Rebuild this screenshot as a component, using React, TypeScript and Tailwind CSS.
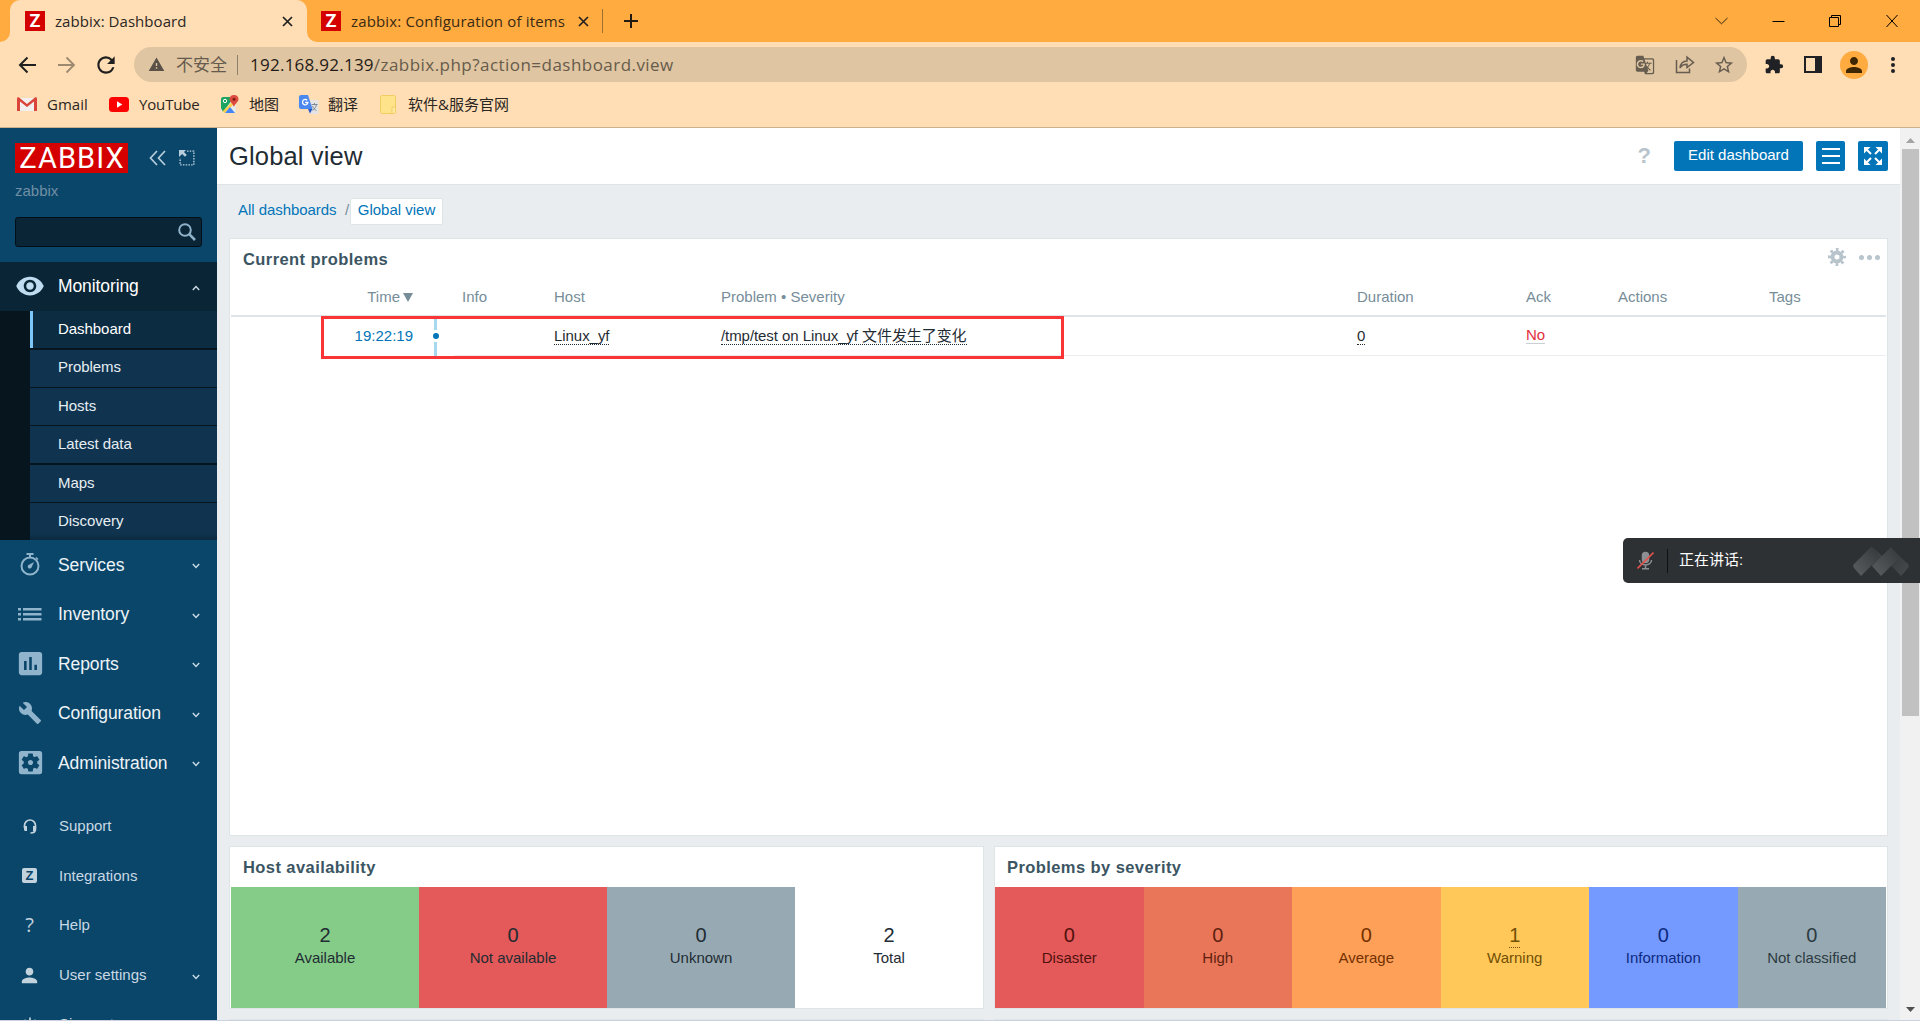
import React from "react";
import {
  MdExtension,
  MdGTranslate,
  MdInsertChart,
  MdPerson,
  MdPowerSettingsNew,
  MdRemoveRedEye,
  MdSettingsApplications,
  MdBuild,
  MdStarBorder,
  MdRefresh,
  MdWarning,
} from "react-icons/md";

const chromeFont = "font-['Open_Sans','Noto_Sans_CJK_SC',sans-serif]";
const appFont = "font-['Liberation_Sans','Noto_Sans_CJK_SC',sans-serif]";

function ZFavicon() {
  return (
    <div className="flex h-5 w-5 shrink-0 items-center justify-center bg-[#d40000] font-['Roboto',sans-serif] text-[18px] leading-none font-bold text-white">
      Z
    </div>
  );
}

function TabClose() {
  return (
    <svg className="h-[11px] w-[11px]" viewBox="0 0 11 11" stroke="#1f1f1f" strokeWidth="1.7">
      <path d="M1 1l9 9M10 1l-9 9" />
    </svg>
  );
}

function TabStrip() {
  return (
    <div className="flex h-[42px] bg-[#ffab40]">
      <div className="flex w-[10px] items-end">
        <div className="h-[10px] w-[10px] bg-[#ffdeb5]">
          <div className="h-full w-full rounded-br-[10px] bg-[#ffab40]" />
        </div>
      </div>
      <div className="flex w-[297px] items-center rounded-t-[10px] bg-[#ffdeb5] pr-[14px] pl-[15px]">
        <ZFavicon />
        <span className="ml-[10px] flex-1 text-[15px] tracking-[0.05px] text-[#2b2622]">zabbix: Dashboard</span>
        <TabClose />
      </div>
      <div className="flex w-[10px] items-end">
        <div className="h-[10px] w-[10px] bg-[#ffdeb5]">
          <div className="h-full w-full rounded-bl-[10px] bg-[#ffab40]" />
        </div>
      </div>
      <div className="flex w-[287px] items-center border-r border-transparent pl-[4px]">
        <ZFavicon />
        <span className="ml-[10px] w-[228px] text-[15px] tracking-[0.16px] whitespace-nowrap text-[#3a2a14]">
          zabbix: Configuration of items
        </span>
        <TabClose />
        <div className="ml-[13px] h-6 w-px shrink-0 bg-[#a07032]" />
      </div>
      <div className="flex w-[54px] items-center justify-center">
        <svg className="h-[14px] w-[14px]" viewBox="0 0 14 14" stroke="#221a10" strokeWidth="2">
          <path d="M7 0v14M0 7h14" />
        </svg>
      </div>
      <div className="flex flex-1 items-center justify-end pr-[22px]">
        <svg className="h-[12px] w-[183px]" viewBox="0 0 183 12" fill="none" stroke="#000">
          <path strokeWidth=".8" d="M.5 3l6 5.800 6-5.800" />
          <path d="M57.500 6.500h12" />
          <path d="M114.500 2.500h9v9h-9zM116.500 2.500v-2h9v9h-2" />
          <path d="M171.500 0l11 12M182.500 0l-11 12" />
        </svg>
      </div>
    </div>
  );
}

function Toolbar() {
  return (
    <div className="flex h-[45px] items-center bg-[#ffdeb5]">
      <div className="flex w-[134px] shrink-0 items-center pl-[18px]">
        <svg className="h-[18px] w-[18px]" viewBox="0 0 18 18" fill="none" stroke="#1f1f1f" strokeWidth="2">
          <path d="M18 9H2M9.500 1.500L2 9l7.500 7.500" />
        </svg>
        <svg className="ml-[22px] h-[18px] w-[18px]" viewBox="0 0 18 18" fill="none" stroke="#9c8970" strokeWidth="1.800">
          <path d="M0 9h16M8.500 1.500L16 9l-7.500 7.500" />
        </svg>
        <MdRefresh className="ml-[17px] h-[26px] w-[26px] text-[#1f1f1f]" />
      </div>
      <div className="flex h-[35px] w-[1613px] shrink-0 items-center rounded-full bg-[#dfc5a1] pr-[12px] pl-[14px]">
        <MdWarning className="h-[17px] w-[17px] text-[#595047]" />
        <span className="ml-[11px] text-[17px] text-[#655a4d]">不安全</span>
        <div className="ml-[10px] h-5 w-px bg-[#8f806b]" />
        <span className="ml-[12px] flex-1 text-[17px] tracking-[0.46px] text-[#665b4c]">
          <span className="tracking-[0.25px] text-[#1f1b17]">192.168.92.139</span>/zabbix.php?action=dashboard.view
        </span>
        <MdGTranslate className="h-[20px] w-[20px] text-[#665c50]" />
        <svg className="ml-[20px] h-[19px] w-[20px]" viewBox="0 0 20 19" fill="none" stroke="#665c50" strokeWidth="1.500">
          <path d="M1.500 5v12.500h13v-4" />
          <path d="M5 13c.5-4.500 3-7 7-7V2.200L18.500 7.500 12 12.500V9.200C9 9.200 6.500 10.200 5 13z" />
        </svg>
        <MdStarBorder className="ml-[18px] h-[22px] w-[22px] text-[#665c50]" />
      </div>
      <MdExtension className="ml-[17px] h-[20px] w-[20px] text-[#202124]" />
      <div className="ml-[20px] h-[17px] w-[18px] border-[2.5px] border-r-[7px] border-[#202124]" />
      <div className="ml-[18px] flex h-[28px] w-[28px] items-center justify-center rounded-full bg-[#ffab40]">
        <MdPerson className="h-[24px] w-[24px] text-[#3d2600]" />
      </div>
      <div className="ml-[23px] flex flex-col gap-[2px]">
        <i className="h-1 w-1 rounded-full bg-[#202124]" />
        <i className="h-1 w-1 rounded-full bg-[#202124]" />
        <i className="h-1 w-1 rounded-full bg-[#202124]" />
      </div>
    </div>
  );
}

function Bookmarks() {
  return (
    <div className="flex h-[41px] items-center border-b border-[#cdb18c] bg-[#ffdeb5] pb-[5px] pl-[17px] text-[15px] text-[#2b2622]">
      <svg className="h-[15px] w-[20px]" viewBox="0 0 20 15">
        <path fill="#f3efef" d="M2 1h16v13H2z" />
        <path fill="#d9453b" d="M0 1.500C0 .5 1 0 1.800.3L10 7 18.200.3C19 0 20 .5 20 1.500V14h-3V4.500L10 10 3 4.500V14H0z" />
      </svg>
      <span className="ml-[10px] w-[41px]">Gmail</span>
      <svg className="ml-[21px] h-[15px] w-[20px]" viewBox="0 0 20 15">
        <rect width="20" height="15" rx="3.500" fill="#f00" />
        <path fill="#fff" d="M8 4.300l5.300 3.200L8 10.700z" />
      </svg>
      <span className="ml-[10px] w-[61px] tracking-[-0.15px]">YouTube</span>
      <svg className="ml-[20px] h-[19px] w-[19px]" viewBox="0 0 19 19">
        <rect x="1" y="2" width="15" height="16" rx="2" fill="#e8eaea" />
        <path fill="#1da462" d="M3 2h10L1 14V4c0-1 1-2 2-2z" />
        <path fill="#1da462" d="M1 13L12 2v3L3 17z" />
        <path fill="#ffd04b" d="M2 17L14 5l2 2L5 18z" />
        <path fill="#4285f4" d="M5 18l5-6 5 6z" />
        <path fill="#dd4b3e" d="M14 0c3 0 4.500 2 4.500 4.300C18.500 7 15 8.500 14 12c-1-3.500-4.500-5-4.500-7.700C9.500 2 11 0 14 0z" />
        <circle cx="14" cy="4.300" r="1.500" fill="#7c2016" />
        <circle cx="5" cy="6" r="1.700" fill="none" stroke="#fff" />
      </svg>
      <span className="ml-[10px] w-[30px] whitespace-nowrap">地图</span>
      <svg className="ml-[20px] h-[20px] w-[20px]" viewBox="0 0 20 20">
        <path fill="#e4e4e4" d="M7 5h11c1 0 1.500.5 1.500 1.500v11c0 1-.5 1.500-1.500 1.500h-7z" />
        <path fill="#4a87ee" d="M2 0h7l4.500 14H2c-1 0-2-.8-2-2V2C0 .8 1 0 2 0z" />
        <path fill="#2a56c6" d="M9 14h4.500L11 18.500z" />
        <path fill="none" stroke="#fff" strokeWidth="1.300" d="M8.200 5.300a2.700 2.700 0 1 0 .7 2.200H6.200" />
        <path fill="none" stroke="#7c8994" d="M12.500 9.500h6M15.500 8v1.500M17.500 9.500c-.5 2.500-2 4.500-4 6M13.500 11c.8 2 2 3.500 4 4.500" />
      </svg>
      <span className="ml-[9px] w-[30px] whitespace-nowrap">翻译</span>
      <svg className="ml-[22px] h-[19px] w-[16px]" viewBox="0 0 16 19">
        <path fill="#ffe38a" stroke="#f1cd62" d="M.5 2c0-1 .5-1.500 1.500-1.500h12c1 0 1.500.5 1.500 1.500v15c0 1-.5 1.500-1.500 1.500H2C1 18.500.5 18 .5 17z" />
        <path fill="#ffe9a3" stroke="#f1cd62" d="M12 12h3.500v5c0 1-.5 1.500-1.500 1.500h-2z" />
      </svg>
      <span className="ml-[12px] whitespace-nowrap">软件&amp;服务官网</span>
    </div>
  );
}

function Chevron({ up = false }: { up?: boolean }) {
  return (
    <svg className="mt-[3px] h-[6px] w-[8px]" viewBox="0 0 8 6" fill="none" stroke="#c9dbe6" strokeWidth="1.400">
      <path d={up ? "M.8 5L4 1.500 7.200 5" : "M.8 1L4 4.500 7.200 1"} />
    </svg>
  );
}

const stopwatch = (
  <svg className="h-[23px] w-[20px]" viewBox="0 0 20 23" fill="none" stroke="#90b4cb">
    <circle cx="10" cy="13" r="8.500" strokeWidth="2" />
    <path strokeWidth="2" d="M6.500 1h7M10 1v4" />
    <path strokeWidth="1.500" d="M16 4.500l2 2" />
    <path fill="#90b4cb" stroke="none" d="M14 9l-2.500 5.500a2 2 0 1 1-2.500-2.800z" />
  </svg>
);

const listIcon = (
  <svg className="h-[13px] w-[24px]" viewBox="0 0 24 13" fill="#90b4cb">
    <path d="M0 0h3v2.500H0zM0 5h3v2.500H0zM0 10h3v2.500H0zM5 0h18.500v2.500H5zM5 5h18.500v2.500H5zM5 10h18.500v2.500H5z" />
  </svg>
);

const mainMenu = [
  { label: "Services", icon: stopwatch },
  { label: "Inventory", icon: listIcon },
  { label: "Reports", icon: <MdInsertChart className="h-[31px] w-[31px] shrink-0" /> },
  { label: "Configuration", icon: <MdBuild className="h-[24px] w-[24px] shrink-0" /> },
  { label: "Administration", icon: <MdSettingsApplications className="h-[31px] w-[31px] shrink-0" /> },
];

const headset = (
  <svg className="h-[15px] w-[14px]" viewBox="0 0 14 15" fill="none" stroke="#c3d3de" strokeWidth="1.700">
    <path d="M1.500 9V6.500a5.500 5.500 0 0 1 11 0V10c0 2.500-1.500 4-5 4" />
    <path fill="#c3d3de" stroke="none" d="M1 7h3v5H2.500A1.500 1.500 0 0 1 1 10.500zM10 7h3v5h-3z" />
  </svg>
);

const userMenu = [
  { label: "Support", icon: headset },
  {
    label: "Integrations",
    icon: (
      <div className="flex h-[15px] w-[15px] items-center justify-center rounded-[2px] bg-[#c3d3de] text-[13px] leading-none font-black text-[#0a466a]">
        Z
      </div>
    ),
  },
  { label: "Help", icon: <span className="font-['Open_Sans'] text-[20px] leading-none text-[#c3d3de]">?</span> },
  { label: "User settings", icon: <MdPerson className="h-[23px] w-[23px] shrink-0" />, sub: true },
  { label: "Sign out", icon: <MdPowerSettingsNew className="h-[20px] w-[20px] shrink-0" /> },
];

function SubItem({ label, className }: { label: string; className: string }) {
  return (
    <div className={`flex items-center pl-[28px] text-[15px] tracking-[-0.05px] text-[#e6eef3] ${className}`}>{label}</div>
  );
}

function Sidebar() {
  return (
    <aside className="flex h-[892px] w-[217px] shrink-0 flex-col overflow-hidden bg-[#0a466a]">
      <div className="mt-[15px] flex h-[30px] shrink-0 items-center pl-[15px]">
        <div className="flex h-[30px] w-[113px] items-center justify-center bg-[#d40000] pl-px font-['Roboto','Liberation_Sans'] text-[29px] leading-[30px] tracking-[1.1px] text-white">
          ZABBIX
        </div>
        <svg className="ml-[21px] h-[16px] w-[17px]" viewBox="0 0 17 16" fill="none" stroke="#b7cddb" strokeWidth="1.700">
          <path d="M8 1L1.500 8 8 15M16 1L9.500 8l6.500 7" />
        </svg>
        <svg className="ml-[13px] h-[16px] w-[16px]" viewBox="0 0 17 17" fill="none" stroke="#b7cddb">
          <path strokeWidth="1.500" strokeDasharray="1.600 1.300" d="M8.500 1.200h7.300v14.600H1.200V8.500" />
          <path fill="#b7cddb" stroke="none" d="M0 0h7.500L5.300 2.200l3 3-2 2-3-3L0 7.500z" />
        </svg>
      </div>
      <div className="mt-[9px] pl-[15px] text-[15px] leading-[18px] text-[#708fa5]">zabbix</div>
      <div className="mt-[17px] ml-[15px] flex h-[30px] w-[187px] shrink-0 items-center justify-end rounded-[3px] border border-[#020e18] bg-[#0a2636] pr-[5px]">
        <svg className="h-[18px] w-[18px]" viewBox="0 0 18 18" fill="none" stroke="#8fb2c9" strokeWidth="2">
          <circle cx="7" cy="7" r="5.800" />
          <path strokeWidth="2.500" d="M11.200 11.200l5.800 5.800" />
        </svg>
      </div>
      <div className="mt-[15px] flex h-[49px] shrink-0 items-center bg-[#0a2636] pr-[17px] pb-px">
        <div className="flex w-[58px] items-center justify-center pl-[2px] text-[#bfdcf0]">
          <MdRemoveRedEye className="h-[30px] w-[30px]" />
        </div>
        <span className="flex-1 text-[17.5px] tracking-[-0.1px] text-white">Monitoring</span>
        <Chevron up />
      </div>
      <div className="flex h-[229px] shrink-0 flex-col bg-[#06151e] pl-[30px]">
        <SubItem label="Dashboard" className="h-[37px] border-l-[3px] border-[#7cc7f8] bg-[#0c2c42] !pl-[25px] pb-[1px] !text-white" />
        <SubItem label="Problems" className="mt-[2px] h-[37px] bg-[#10344f] pb-[3px]" />
        <SubItem label="Hosts" className="mt-px h-[37px] bg-[#10344f] pb-px" />
        <SubItem label="Latest data" className="mt-px h-[37px] bg-[#10344f] pb-px" />
        <SubItem label="Maps" className="mt-[2px] h-[37px] bg-[#10344f] pb-px" />
        <SubItem label="Discovery" className="mt-px h-[37px] bg-gradient-to-b from-[#10344f] from-80% to-[#0c2a40] pb-px" />
      </div>
      {mainMenu.map((m) => (
        <div key={m.label} className="flex h-[49.5px] shrink-0 items-center pr-[17px]">
          <div className="flex w-[58px] items-center justify-center pl-[2px] text-[#90b4cb]">{m.icon}</div>
          <span className="flex-1 text-[17.5px] tracking-[-0.1px] text-[#eef4f8]">{m.label}</span>
          <Chevron />
        </div>
      ))}
      <div className="mt-[14px] flex flex-col">
        {userMenu.map((m) => (
          <div key={m.label} className="flex h-[49.6px] shrink-0 items-center pr-[17px]">
            <div className="flex w-[59px] items-center justify-center text-[#c3d3de]">{m.icon}</div>
            <span className="flex-1 text-[15px] text-[#c9d9e4]">{m.label}</span>
            {m.sub && <Chevron />}
          </div>
        ))}
      </div>
    </aside>
  );
}

function PageHeader() {
  return (
    <div className="flex h-[57px] shrink-0 items-center border-b border-[#dfe4e7] bg-white pr-3 pl-[12px]">
      <h1 className="flex-1 pt-px text-[25.5px] tracking-[0.15px] text-[#1f2c33]">Global view</h1>
      <span className="mr-[23px] pb-[2px] text-[22px] font-bold text-[#b8c4cc]">?</span>
      <div className="flex h-[30px] w-[129px] items-center justify-center rounded-[2px] bg-[#0275b8] pb-[2px] text-[15px] text-white">
        Edit dashboard
      </div>
      <div className="ml-[13px] flex h-[30px] w-[29px] items-center justify-center rounded-[2px] bg-[#0275b8]">
        <svg className="h-[16px] w-[18px]" viewBox="0 0 18 16" stroke="#fff" strokeWidth="2">
          <path d="M0 1h18M0 8h18M0 15h18" />
        </svg>
      </div>
      <div className="ml-[13px] flex h-[30px] w-[30px] items-center justify-center rounded-[2px] bg-[#0275b8]">
        <svg className="h-[18px] w-[18px]" viewBox="0 0 18 18" fill="#fff" stroke="#fff" strokeWidth="2">
          <path d="M2 2l5 5M16 2l-5 5M2 16l5-5M16 16l-5-5" />
          <path stroke="none" d="M0 0h6.500L0 6.500zM18 0h-6.500L18 6.500zM0 18h6.500L0 11.500zM18 18h-6.500l6.500-6.500z" />
        </svg>
      </div>
    </div>
  );
}

function CurrentProblems() {
  return (
    <section className="relative mt-[14px] flex h-[598px] w-[1659px] shrink-0 flex-col border border-[#dfe4e7] bg-white px-px text-[15px]">
      <div className="flex h-[41px] items-center pl-[12px]">
        <h4 className="flex-1 pb-px text-[16.5px] font-bold tracking-[0.42px] text-[#3c5563]">Current problems</h4>
        <svg className="mt-[-5px] h-[18px] w-[18px]" viewBox="0 0 18 18" fill="none" stroke="#b8c4cc">
          <circle cx="9" cy="9" r="4.500" strokeWidth="4" />
          <circle cx="9" cy="9" r="7.500" strokeWidth="3" strokeDasharray="2.700 3.190" strokeDashoffset="1.350" />
        </svg>
        <div className="mt-[-4px] mr-[6px] ml-[13px] flex gap-[3px]">
          <i className="h-[5px] w-[5px] rounded-full bg-[#b8c4cc]" />
          <i className="h-[5px] w-[5px] rounded-full bg-[#b8c4cc]" />
          <i className="h-[5px] w-[5px] rounded-full bg-[#b8c4cc]" />
        </div>
      </div>
      <div className="flex h-[37px] items-center border-b-2 border-[#dfe4e7] text-[#768d99]">
        <div className="flex w-[182px] items-center justify-end gap-[3px]">
          Time
          <svg className="h-[9px] w-[10px]" viewBox="0 0 10 9" fill="#768d99">
            <path d="M0 0h10L5 9z" />
          </svg>
        </div>
        <div className="ml-[49px] w-[92px]">Info</div>
        <div className="w-[167px]">Host</div>
        <div className="w-[636px]">Problem • Severity</div>
        <div className="w-[169px]">Duration</div>
        <div className="w-[92px]">Ack</div>
        <div className="w-[151px]">Actions</div>
        <div>Tags</div>
      </div>
      <div className="flex h-[39px] items-stretch">
        <div className="flex w-[182px] items-center justify-end pb-px text-[#0275b8]">19:22:19</div>
        <div className="ml-[21px] flex w-[3px] flex-col items-center bg-[#a8d8ee]">
          <div className="mt-[13px] flex h-[12px] w-[9px] shrink-0 items-center justify-center bg-white">
            <div className="h-[6px] w-[6px] rounded-full bg-[#0275b8]" />
          </div>
        </div>
        <div className="ml-[17px] flex flex-1 items-center border-b border-[#ebeef0] pl-[8px] text-[#1f2c33]">
          <div className="ml-[92px] w-[167px]">
            <span className="border-b border-dotted border-[#1f2c33] leading-none tracking-[-0.05px]">Linux_yf</span>
          </div>
          <div className="w-[636px]">
            <span className="border-b border-dotted border-[#1f2c33] leading-none tracking-[-0.07px]">
              /tmp/test on Linux_yf 文件发生了变化
            </span>
          </div>
          <div className="w-[169px]">
            <span className="border-b border-dotted border-[#1f2c33] leading-none">0</span>
          </div>
          <div className="pb-px">
            <span className="border-b border-[#c9cfd3] leading-none text-[#e32f3c]">No</span>
          </div>
        </div>
      </div>
      <div className="absolute top-[77px] left-[91px] h-[43px] w-[743px] border-[3px] border-[#fb3535]" />
    </section>
  );
}

const availability = [
  { n: "2", label: "Available", cls: "bg-[#86cc89]" },
  { n: "0", label: "Not available", cls: "bg-[#e45959]" },
  { n: "0", label: "Unknown", cls: "bg-[#97aab3]" },
  { n: "2", label: "Total", cls: "bg-white" },
];

const severities = [
  { n: "0", label: "Disaster", cls: "bg-[#e45959] text-[#52110f]" },
  { n: "0", label: "High", cls: "bg-[#e97659] text-[#5e1f10]" },
  { n: "0", label: "Average", cls: "bg-[#ffa059] text-[#733100]" },
  { n: "1", label: "Warning", cls: "bg-[#ffc859] text-[#725005]" },
  { n: "0", label: "Information", cls: "bg-[#7499ff] text-[#0c2a80]" },
  { n: "0", label: "Not classified", cls: "bg-[#97aab3] text-[#2c3a41]" },
];

function StatWidget({
  title,
  items,
  className,
}: {
  title: string;
  items: { n: string; label: string; cls: string }[];
  className: string;
}) {
  return (
    <section className={`flex h-[163px] flex-col border border-[#dfe4e7] bg-white ${className}`}>
      <h4 className="flex h-[40px] shrink-0 items-center pl-[12px] text-[16.5px] font-bold tracking-[0.42px] text-[#3c5563]">
        {title}
      </h4>
      <div className="flex flex-1">
        {items.map((s) => (
          <div key={s.label} className={`flex flex-1 flex-col items-center pt-[37px] ${s.cls}`}>
            <div
              className={`text-[20px] leading-[23px] ${s.n === "1" ? "border-b border-dotted border-current" : "border-b border-transparent"}`}
            >
              {s.n}
            </div>
            <div className="text-[15px] leading-[20px]">{s.label}</div>
          </div>
        ))}
      </div>
    </section>
  );
}

function ScrollBar() {
  return (
    <div className="flex w-5 shrink-0 flex-col items-center bg-[#f1f1f1]">
      <div className="flex h-[21px] items-center">
        <svg className="mt-[3px] h-[5px] w-[9px]" viewBox="0 0 9 5" fill="#a3a3a3">
          <path d="M0 5L4.500 0 9 5z" />
        </svg>
      </div>
      <div className="ml-px h-[567px] w-[17px] bg-[#c1c1c1]" />
      <div className="flex-1" />
      <svg className="mb-[8px] h-[5px] w-[9px]" viewBox="0 0 9 5" fill="#505050">
        <path d="M0 0h9L4.500 5z" />
      </svg>
    </div>
  );
}

function SpeakingToast() {
  return (
    <div className="absolute top-[538px] right-0 flex h-[45px] w-[297px] items-center rounded-l-[5px] bg-[#2e3134] pl-[14px]">
      <svg className="h-[19px] w-[17px]" viewBox="0 0 17 19" fill="none" stroke="#8d9093" strokeWidth="1.500">
        <rect x="5.500" y="1.500" width="6" height="10" rx="3" fill="#8d9093" />
        <path d="M2.500 9c0 6.500 12 6.500 12 0M8.500 14v3.500M5 17.700h7" />
        <path stroke="#e2534b" strokeWidth="1.600" d="M.5 17.500l16-16" />
      </svg>
      <div className="ml-[13px] h-6 w-px bg-[#0f1011]" />
      <span className="ml-[11px] flex-1 text-[15px] whitespace-nowrap text-white">正在讲话:</span>
      <svg className="mr-[10px] h-[30px] w-[57px]" viewBox="0 0 57 30">
        <defs>
          <linearGradient id="wing" x1="0" y1="1" x2="1" y2="0">
            <stop offset="0" stopColor="#5c5f62" />
            <stop offset="1" stopColor="#34373a" />
          </linearGradient>
          <linearGradient id="fold" x1="0" y1="0" x2="1" y2="1">
            <stop offset="0" stopColor="#303336" />
            <stop offset="1" stopColor="#484b4e" />
          </linearGradient>
        </defs>
        <path fill="url(#fold)" d="M19 0l11 11-10 9-8-9z" />
        <path fill="url(#wing)" d="M18 1l9 10L8 30 1 22c-1-1.500-1-3 0-4z" />
        <path fill="url(#fold)" d="M38 2l17 16c1 1.500 1 3 0 4l-7 8-18-19z" />
        <path fill="url(#wing)" d="M38 1l9 10-19 19-9-10z" />
      </svg>
    </div>
  );
}

export default function App() {
  return (
    <div className={`relative flex h-[1021px] w-[1920px] flex-col overflow-hidden bg-[#cdd2e0] ${appFont}`}>
      <header className={chromeFont}>
        <TabStrip />
        <Toolbar />
        <Bookmarks />
      </header>
      <div className="flex h-[892px]">
        <Sidebar />
        <main className="flex h-[892px] w-[1683px] shrink-0 flex-col overflow-hidden bg-[#e9edf0]">
          <PageHeader />
          <div className="flex flex-1 flex-col pt-[13px] pl-[12px]">
            <div className="flex h-[26px] shrink-0 items-center pl-[9px] text-[15px] text-[#0275b8]">
              <span className="w-[98px] pb-[2px] tracking-[-0.05px] whitespace-nowrap">All dashboards</span>
              <span className="ml-[9px] w-[5px] pb-[2px] text-[#768d99]">/</span>
              <span className="flex h-[27px] w-[93px] items-center justify-center rounded-[2px] border border-[#dfe4e7] bg-white pb-[2px] whitespace-nowrap">
                Global view
              </span>
            </div>
            <CurrentProblems />
            <div className="mt-[10px] flex shrink-0 gap-[10px]">
              <StatWidget title="Host availability" items={availability} className="w-[755px] pl-px text-[#1f2c33]" />
              <StatWidget title="Problems by severity" items={severities} className="w-[894px] pr-px" />
            </div>
            <div className="mt-[10px] flex gap-[10px]">
              <div className="h-px w-[755px] bg-[#dfe4e7]" />
              <div className="h-px w-[894px] bg-[#dfe4e7]" />
            </div>
          </div>
        </main>
        <ScrollBar />
      </div>
      <SpeakingToast />
    </div>
  );
}
